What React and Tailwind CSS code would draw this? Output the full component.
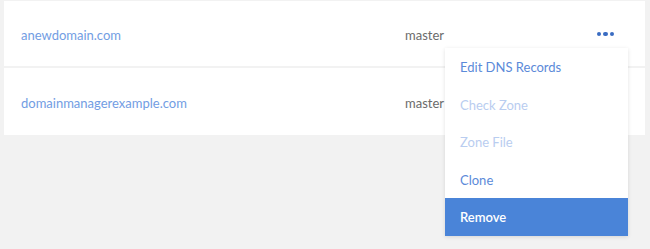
const rows = [
  { name: "anewdomain.com", type: "master" },
  { name: "domainmanagerexample.com", type: "master" },
];

const items = [
  { t: "Edit DNS Records", c: "text-[#5b8ad9]" },
  { t: "Check Zone", c: "text-[#b9cdf0]" },
  { t: "Zone File", c: "text-[#b9cdf0]" },
  { t: "Clone", c: "text-[#5b8ad9]" },
  { t: "Remove", c: "bg-[#4a84d8] text-white font-semibold" },
];

export default function App() {
  return (
    <div className="relative h-[249px] w-[650px] bg-[#f2f2f2] font-['Lato','Liberation_Sans',sans-serif] text-[13px]">
      <div className="absolute left-[4px] right-[5px] top-[1px] bg-white">
        {rows.map((r, i) => (
          <div
            key={r.name}
            className={`flex h-[67px] items-center pl-[17px] pr-[31px] pt-[4px] ${i === 0 ? "border-b-2 border-[#f2f2f2]" : ""}`}
          >
            <div className="w-[384px] text-[#729de3]">{r.name}</div>
            <div className="flex-1 text-[#6b6b6b]">{r.type}</div>
            {i === 0 ? (
              <div className="flex items-center gap-[2px] pb-[3px]">
                <span className="h-[4.5px] w-[4.5px] rounded-full bg-[#3a6cc2]" />
                <span className="h-[4.5px] w-[4.5px] rounded-full bg-[#3a6cc2]" />
                <span className="h-[4.5px] w-[4.5px] rounded-full bg-[#3a6cc2]" />
              </div>
            ) : null}
          </div>
        ))}
      </div>

      <div className="absolute left-[445px] top-[48px] w-[183px] bg-white shadow-[0_1px_4px_rgba(0,0,0,0.12)]">
        {items.map((it) => (
          <div key={it.t} className={`flex h-[37.6px] items-center pl-[15px] pt-[2px] ${it.c}`}>
            {it.t}
          </div>
        ))}
      </div>
    </div>
  );
}
